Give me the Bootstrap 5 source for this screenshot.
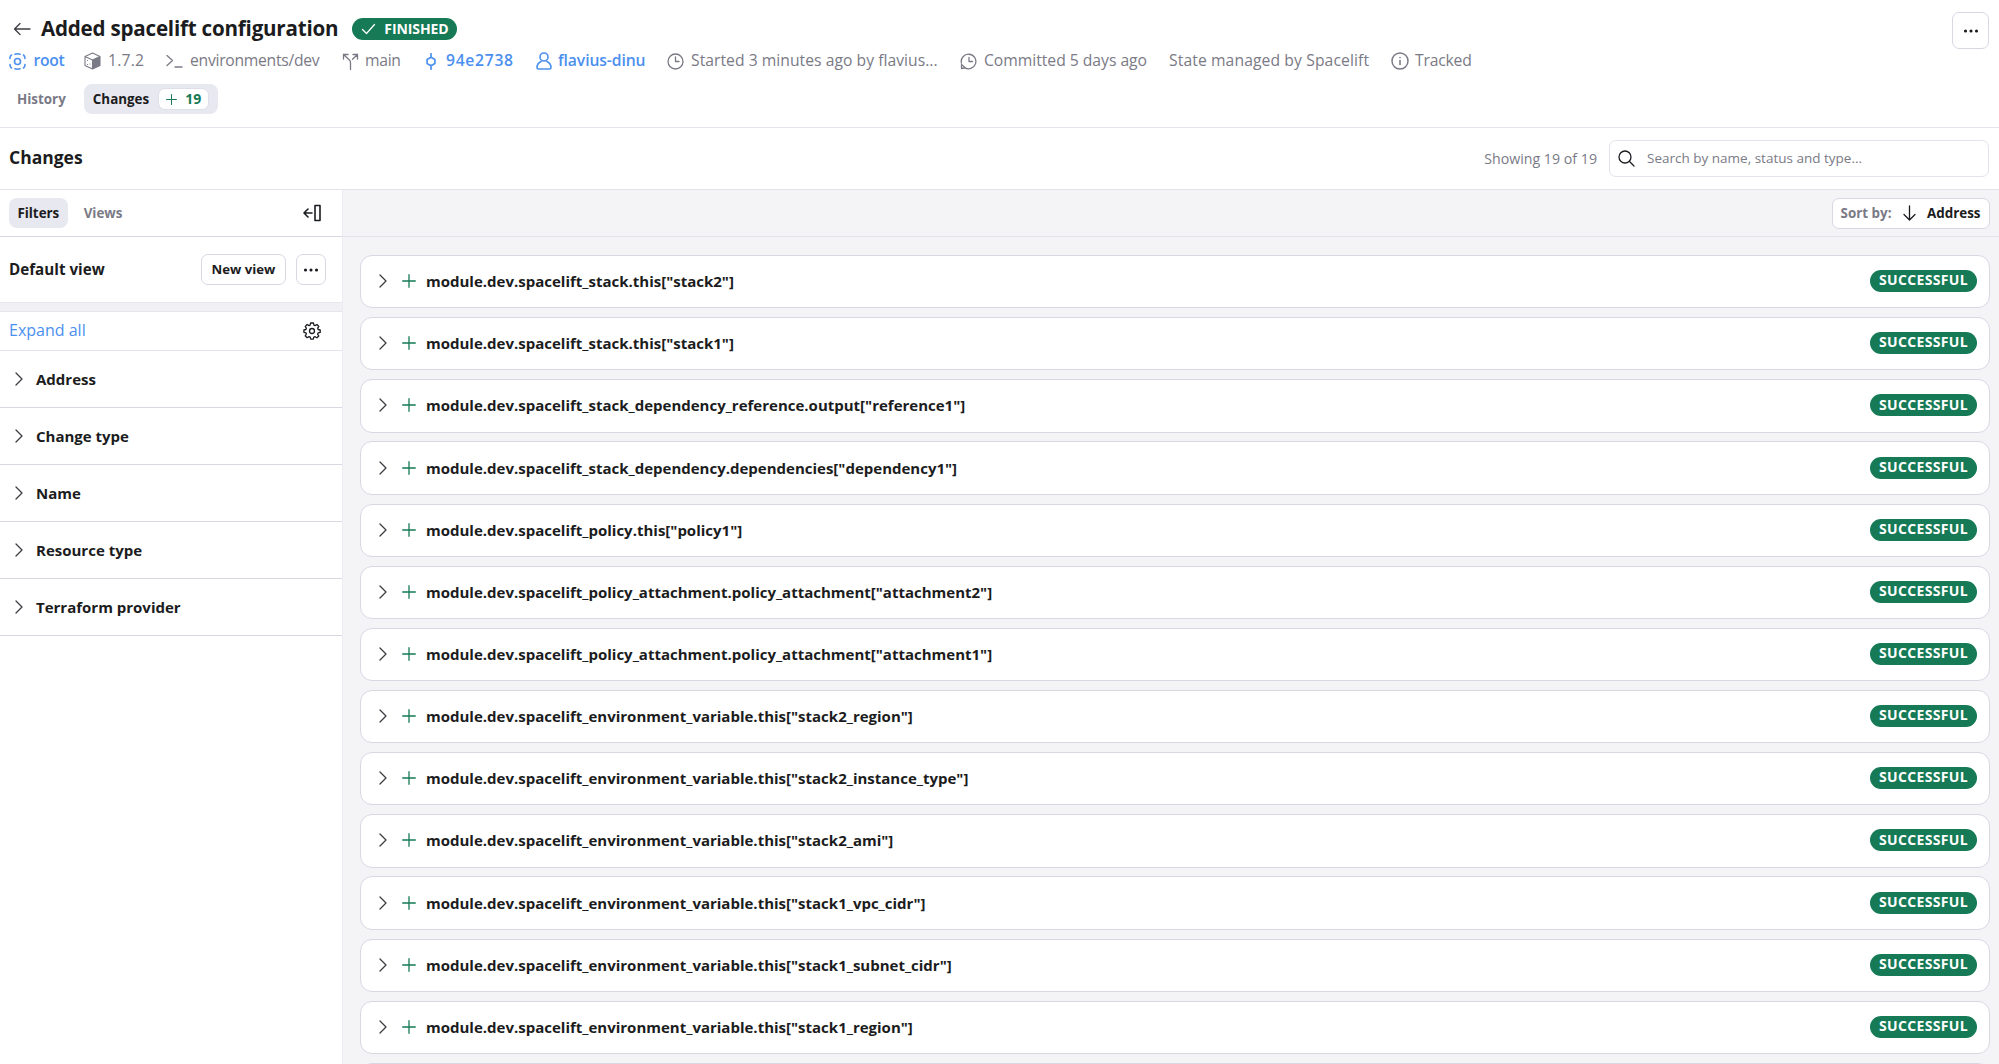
<!DOCTYPE html>
<html lang="en">
<head>
<meta charset="utf-8">
<meta name="viewport" content="width=device-width, initial-scale=1">
<title>Added spacelift configuration</title>
<link href="https://cdn.jsdelivr.net/npm/bootstrap@5.3.0/dist/css/bootstrap.min.css" rel="stylesheet">
<style>
:root{--ink:#1b1c20;--muted:#7a7a86;--link:#4b90ef;--green:#157a55;--line:#e3e3ec;--edge:#d8d7e4;--pill:#e8e8f1;--soft:#f4f4f7}
body{font-family:"Open Sans","Noto Sans",sans-serif;color:var(--ink);background:#fff;height:100vh;overflow:hidden;line-height:1.2}
svg{display:block;flex:none;fill:none;stroke:currentColor;stroke-width:1.3;stroke-linecap:round;stroke-linejoin:round}
.top-head{height:128px;border-bottom:1px solid var(--line);padding:12px 10px 0 9px}
.run-title{font-size:20.6px;font-weight:700;letter-spacing:-.22px;margin:-1px 14px 0 10px}
.tag{background:var(--green);color:#fff;font-size:14px;font-weight:700;height:22px;border-radius:11px;padding:0 8px 0 9px}
.tag-done{letter-spacing:-.1px}
.tag-ok{letter-spacing:.35px;padding:0 8.5px 1px;margin-right:12.5px}
.title-row{height:34px}
.title-row svg,.facet svg,.change svg:first-child{color:#3c3d43}
.title-row .tag svg{color:#fff}
.meta-row{height:22px;margin-top:4px;font-size:15.7px;color:var(--muted)}
.meta-row>div{display:flex;align-items:center;white-space:nowrap;flex:none}
.meta-row span{margin-top:-1px}
.meta-row .blue{color:var(--link);font-weight:600}
.m-root{width:75px;gap:7.5px}.m-root span{letter-spacing:-.3px}.m-ver{width:82px;gap:7px}.m-ver span{letter-spacing:.2px}.m-path{width:176px;gap:7px}.m-branch{width:83px;gap:6px}.m-branch span{letter-spacing:-.3px}.m-sha{width:111px;gap:9px}.m-user{width:131px;gap:6px}.m-start{width:293px;gap:7px}.m-commit{width:209px;gap:7px}.m-state{width:222px}.m-track{gap:6px}
.m-path span{letter-spacing:-.27px}.m-sha span{letter-spacing:.7px}.m-user span{letter-spacing:-.1px}.m-start span{letter-spacing:.03px}.m-commit span{letter-spacing:-.02px}.m-state span{letter-spacing:.1px}.m-track span{letter-spacing:-.2px}
.tabs-row{margin-top:12px;font-size:13.4px;font-weight:700}
.tab-off{color:var(--muted);padding:0 18px 0 8px}
.tab-on{background:var(--pill);border-radius:8px;height:30px;padding:0 9px}
.side .tab-on{padding:0 8.5px;letter-spacing:-.05px}
.count-box{background:#fff;border:1px solid #dfdfe9;border-radius:7px;height:22px;width:51px;margin-left:1px;color:var(--green);font-size:14px}
.square-btn{border:1px solid var(--edge);border-radius:7px;background:#fff;color:var(--ink);padding:0;width:37px;height:37px}
.sub-head{height:62px;border-bottom:1px solid var(--line);padding:0 10px 0 9px}
.sub-head h2{font-size:17.5px;font-weight:700;padding-bottom:2px}
.showing{font-size:14.2px;color:var(--muted)}
.search-box{width:380px;height:37px;border:1px solid var(--line);border-radius:7px;padding:0 8px;margin-left:12px}
.search-box input{font-size:13.5px;color:var(--muted);padding:0;line-height:1.2}
.search-box input::placeholder{color:var(--muted);opacity:1}
.main-row{height:874px}
.side{width:343px;border-right:1px solid #ececf2}
.bar{height:47px;border-bottom:1px solid var(--edge);font-size:13.4px;font-weight:700}
.side .bar{padding:0 21px 0 9px}
.view-row{height:65px;padding:0 16px 0 9px}
.view-row strong{font-size:15.2px}
.small-btn{height:31px;font-size:13.2px;font-weight:700;line-height:1;border:1px solid var(--edge);border-radius:7px;background:#fff;color:var(--ink);padding:0}
.new-view{width:85px}
.view-more{width:30px;margin-left:10px}
.band{height:10px;background:#f1f1f5;border-top:1px solid #e6e6ee;border-bottom:1px solid #e6e6ee}
.expand-row{height:39px;padding:0 21px 0 9px;border-bottom:1px solid var(--line)}
.expand-row a{color:var(--link);font-size:16px;text-decoration:none}
.facet{height:57.1px;border-bottom:1px solid var(--edge);padding:0 0 1px 15px;font-size:15px;font-weight:700;gap:13px}
.pane{background:var(--soft)}
.pane .bar{padding-right:9.5px;border-color:var(--line)}
.sort-btn{width:158px;height:31px;border:1px solid var(--edge);border-radius:7px;background:#fff;padding:0 8px}
.sort-label{color:var(--muted)}
.stack-list{padding:18px 9px 0 17px;gap:8.8px}
.change{height:53.35px;flex:none;border:1px solid var(--edge);border-radius:12px;background:#fff;padding:0 0 1px 18px;font-size:15px;font-weight:700;white-space:nowrap}
.change .plus{color:var(--green);margin:0 10px 0 15px}
</style>
<script src="https://cdn.jsdelivr.net/npm/bootstrap@5.3.0/dist/js/bootstrap.bundle.min.js"></script>
</head>
<body>
<svg width="0" height="0" class="position-absolute">
<symbol id="chev" viewBox="0 0 8 14"><path d="M1 1l6 6-6 6"/></symbol>
<symbol id="plus" viewBox="0 0 14 14"><path d="M7 .7v12.6M.7 7h12.6"/></symbol>
<symbol id="dots" viewBox="0 0 16 4"><path d="M2.500 2h.01M8 2h.01M13.500 2h.01" stroke-width="3.100"/></symbol>
</svg>

<header class="top-head d-flex justify-content-between align-items-start">
  <div>
    <div class="title-row d-flex align-items-center">
      <svg class="ms-1" width="18" height="14" viewBox="0 0 18 14"><path d="M17 7H1.500M7 1.500L1.500 7 7 12.500"/></svg>
      <h1 class="run-title">Added spacelift configuration</h1>
      <span class="tag tag-done d-flex align-items-center"><svg class="me-1" width="15" height="12" viewBox="0 0 15 12"><path d="M1.500 6.500l4 4L13.500 1.500"/></svg><span class="ps-1">FINISHED</span></span>
    </div>
    <div class="meta-row d-flex align-items-center">
      <div class="m-root blue"><svg width="17" height="17" viewBox="0 0 17 17"><path d="M1 5.500V4.500Q1 3 2.500 2M6 1.200Q8.500.400 11 1.200M14.500 2Q16 3 16 5.500M16 11.500Q16 14 14.500 15M11 15.800Q8.500 16.600 6 15.800M2.500 15Q1 14 1 11.500" stroke-width="1.600"/><circle cx="8.500" cy="8.500" r="3" stroke-width="1.600"/></svg><span>root</span></div>
      <div class="m-ver"><svg width="17" height="18" viewBox="0 0 17 18"><path d="M8.500 1L16 4.500v9L8.500 17 1 13.500v-9zM1 4.500L8.500 8 16 4.500M8.500 8v9" stroke-width="1.100"/><path d="M8.500 8L16 4.500v9L8.500 17z" fill="currentColor" stroke="none"/><path d="M3.500 8.500v.1M6 12v.1M3.500 12.500v.1" stroke-width="1"/></svg><span>1.7.2</span></div>
      <div class="m-path"><svg width="17" height="14" viewBox="0 0 17 14"><path d="M1 1.500l5.500 5L1 11.500M9 13h7"/></svg><span>environments/dev</span></div>
      <div class="m-branch"><svg width="17" height="17" viewBox="0 0 17 17"><path d="M1.500 6V1.500H6M1.500 1.500l6 5.500Q8.500 8 8.500 10v6.500M11 1.500h4.500V6M15.500 1.500l-5 4.700"/></svg><span>main</span></div>
      <div class="m-sha blue"><svg width="12" height="17" viewBox="0 0 12 17"><path d="M6 .8v3.500M6 12.700v3.500M6 4.300l3.900 2.200v4L6 12.700l-3.900-2.200v-4z" stroke-width="1.700"/></svg><span>94e2738</span></div>
      <div class="m-user blue"><svg width="16" height="18" viewBox="0 0 16 18"><circle cx="8" cy="5" r="4" stroke-width="1.600"/><path d="M5 9.500Q1 11.500 1 15.500Q1 17 2.500 17H13.500Q15 17 15 15.500Q15 11.500 11 9.500" stroke-width="1.600"/></svg><span>flavius-dinu</span></div>
      <div class="m-start"><svg width="17" height="17" viewBox="0 0 17 17"><circle cx="8.500" cy="8.500" r="7.500"/><path d="M8.500 4v4.500H12"/></svg><span>Started 3 minutes ago by flavius...</span></div>
      <div class="m-commit"><svg width="17" height="17" viewBox="0 0 17 17"><path d="M1.400 10A7.300 7.300 0 1 1 4.500 14.600M9 4.500v4h3.500M1.500 15.500V11.500l3.500 3M1.500 15.500l3-.5"/></svg><span>Committed 5 days ago</span></div>
      <div class="m-state"><span>State managed by Spacelift</span></div>
      <div class="m-track"><svg width="18" height="18" viewBox="0 0 18 18"><circle cx="9" cy="9" r="8" stroke-width="1.500"/><path d="M9 8.500v4M9 5.500v.1" stroke-width="1.600"/></svg><span>Tracked</span></div>
    </div>
    <div class="tabs-row d-flex align-items-center">
      <span class="tab-off">History</span>
      <div class="tab-on d-flex align-items-center gap-2"><span>Changes</span><span class="count-box d-flex align-items-center justify-content-center gap-1"><svg class="me-1" width="11" height="11"><use href="#plus"/></svg>19</span></div>
    </div>
  </div>
  <button class="square-btn d-flex align-items-center justify-content-center" aria-label="More"><svg width="16" height="4"><use href="#dots"/></svg></button>
</header>

<section class="sub-head d-flex align-items-center">
  <h2 class="mb-0 me-auto">Changes</h2>
  <span class="showing">Showing 19 of 19</span>
  <div class="search-box d-flex align-items-center">
    <svg width="17" height="17" viewBox="0 0 17 17"><circle cx="7" cy="7" r="6"/><path d="M11.500 11.500L16 16"/></svg>
    <input class="form-control border-0 bg-transparent shadow-none ms-2 ps-1" type="text" placeholder="Search by name, status and type...">
  </div>
</section>

<div class="main-row d-flex">
  <aside class="side flex-shrink-0">
    <div class="bar d-flex align-items-center">
      <span class="tab-on d-flex align-items-center">Filters</span><span class="tab-off ms-2 ps-2">Views</span>
      <svg class="ms-auto" width="18" height="18" viewBox="0 0 18 18"><path d="M9 9H1M5 5L1 9l4 4M12 1.500h5v15h-5z" stroke-width="1.600"/></svg>
    </div>
    <div class="view-row d-flex align-items-center">
      <strong class="me-auto">Default view</strong>
      <button class="small-btn new-view">New view</button>
      <button class="small-btn view-more d-flex align-items-center justify-content-center" aria-label="View options"><svg width="16" height="4"><use href="#dots"/></svg></button>
    </div>
    <div class="band"></div>
    <div class="expand-row d-flex align-items-center justify-content-between">
      <a href="#">Expand all</a>
      <svg width="18" height="18" viewBox="0 0 18 18"><circle cx="9" cy="9" r="2.500"/><path d="M7.600 1h2.800l.5 2.100 1.200.5 1.900-1.100 1.800 1.900-1.100 1.800.5 1.300 2 .5v2.400l-2.100.5-.5 1.200 1.200 1.900-1.900 1.800-1.800-1.100-1.300.5-.5 1.900H7.700l-.5-2-1.200-.5-1.900 1.100-1.900-1.900 1.200-1.800-.5-1.200-2-.5V8l2-.5.5-1.200L2.300 4.400 4.100 2.500 6 3.600l1.100-.5z"/></svg>
    </div>
    <div class="facet d-flex align-items-center"><svg width="8" height="14"><use href="#chev"/></svg>Address</div>
    <div class="facet d-flex align-items-center"><svg width="8" height="14"><use href="#chev"/></svg>Change type</div>
    <div class="facet d-flex align-items-center"><svg width="8" height="14"><use href="#chev"/></svg>Name</div>
    <div class="facet d-flex align-items-center"><svg width="8" height="14"><use href="#chev"/></svg>Resource type</div>
    <div class="facet d-flex align-items-center"><svg width="8" height="14"><use href="#chev"/></svg>Terraform provider</div>
  </aside>
  <main class="pane flex-grow-1 overflow-hidden">
    <div class="bar d-flex align-items-center justify-content-end">
      <div class="sort-btn d-flex align-items-center justify-content-between"><span class="sort-label text-nowrap">Sort by:</span><svg width="13" height="16" viewBox="0 0 13 16"><path d="M6.500.8v14M1 9.500l5.500 5.500L12 9.500"/></svg><span>Address</span></div>
    </div>
    <div class="stack-list d-flex flex-column">
      <div class="change d-flex align-items-center"><svg width="8" height="14"><use href="#chev"/></svg><svg class="plus" width="14" height="14"><use href="#plus"/></svg><span class="me-auto">module.dev.spacelift_stack.this["stack2"]</span><span class="tag tag-ok d-flex align-items-center">SUCCESSFUL</span></div>
      <div class="change d-flex align-items-center"><svg width="8" height="14"><use href="#chev"/></svg><svg class="plus" width="14" height="14"><use href="#plus"/></svg><span class="me-auto">module.dev.spacelift_stack.this["stack1"]</span><span class="tag tag-ok d-flex align-items-center">SUCCESSFUL</span></div>
      <div class="change d-flex align-items-center"><svg width="8" height="14"><use href="#chev"/></svg><svg class="plus" width="14" height="14"><use href="#plus"/></svg><span class="me-auto">module.dev.spacelift_stack_dependency_reference.output["reference1"]</span><span class="tag tag-ok d-flex align-items-center">SUCCESSFUL</span></div>
      <div class="change d-flex align-items-center"><svg width="8" height="14"><use href="#chev"/></svg><svg class="plus" width="14" height="14"><use href="#plus"/></svg><span class="me-auto">module.dev.spacelift_stack_dependency.dependencies["dependency1"]</span><span class="tag tag-ok d-flex align-items-center">SUCCESSFUL</span></div>
      <div class="change d-flex align-items-center"><svg width="8" height="14"><use href="#chev"/></svg><svg class="plus" width="14" height="14"><use href="#plus"/></svg><span class="me-auto">module.dev.spacelift_policy.this["policy1"]</span><span class="tag tag-ok d-flex align-items-center">SUCCESSFUL</span></div>
      <div class="change d-flex align-items-center"><svg width="8" height="14"><use href="#chev"/></svg><svg class="plus" width="14" height="14"><use href="#plus"/></svg><span class="me-auto">module.dev.spacelift_policy_attachment.policy_attachment["attachment2"]</span><span class="tag tag-ok d-flex align-items-center">SUCCESSFUL</span></div>
      <div class="change d-flex align-items-center"><svg width="8" height="14"><use href="#chev"/></svg><svg class="plus" width="14" height="14"><use href="#plus"/></svg><span class="me-auto">module.dev.spacelift_policy_attachment.policy_attachment["attachment1"]</span><span class="tag tag-ok d-flex align-items-center">SUCCESSFUL</span></div>
      <div class="change d-flex align-items-center"><svg width="8" height="14"><use href="#chev"/></svg><svg class="plus" width="14" height="14"><use href="#plus"/></svg><span class="me-auto">module.dev.spacelift_environment_variable.this["stack2_region"]</span><span class="tag tag-ok d-flex align-items-center">SUCCESSFUL</span></div>
      <div class="change d-flex align-items-center"><svg width="8" height="14"><use href="#chev"/></svg><svg class="plus" width="14" height="14"><use href="#plus"/></svg><span class="me-auto">module.dev.spacelift_environment_variable.this["stack2_instance_type"]</span><span class="tag tag-ok d-flex align-items-center">SUCCESSFUL</span></div>
      <div class="change d-flex align-items-center"><svg width="8" height="14"><use href="#chev"/></svg><svg class="plus" width="14" height="14"><use href="#plus"/></svg><span class="me-auto">module.dev.spacelift_environment_variable.this["stack2_ami"]</span><span class="tag tag-ok d-flex align-items-center">SUCCESSFUL</span></div>
      <div class="change d-flex align-items-center"><svg width="8" height="14"><use href="#chev"/></svg><svg class="plus" width="14" height="14"><use href="#plus"/></svg><span class="me-auto">module.dev.spacelift_environment_variable.this["stack1_vpc_cidr"]</span><span class="tag tag-ok d-flex align-items-center">SUCCESSFUL</span></div>
      <div class="change d-flex align-items-center"><svg width="8" height="14"><use href="#chev"/></svg><svg class="plus" width="14" height="14"><use href="#plus"/></svg><span class="me-auto">module.dev.spacelift_environment_variable.this["stack1_subnet_cidr"]</span><span class="tag tag-ok d-flex align-items-center">SUCCESSFUL</span></div>
      <div class="change d-flex align-items-center"><svg width="8" height="14"><use href="#chev"/></svg><svg class="plus" width="14" height="14"><use href="#plus"/></svg><span class="me-auto">module.dev.spacelift_environment_variable.this["stack1_region"]</span><span class="tag tag-ok d-flex align-items-center">SUCCESSFUL</span></div>
      <div class="change"></div>
    </div>
  </main>
</div>
</body>
</html>
